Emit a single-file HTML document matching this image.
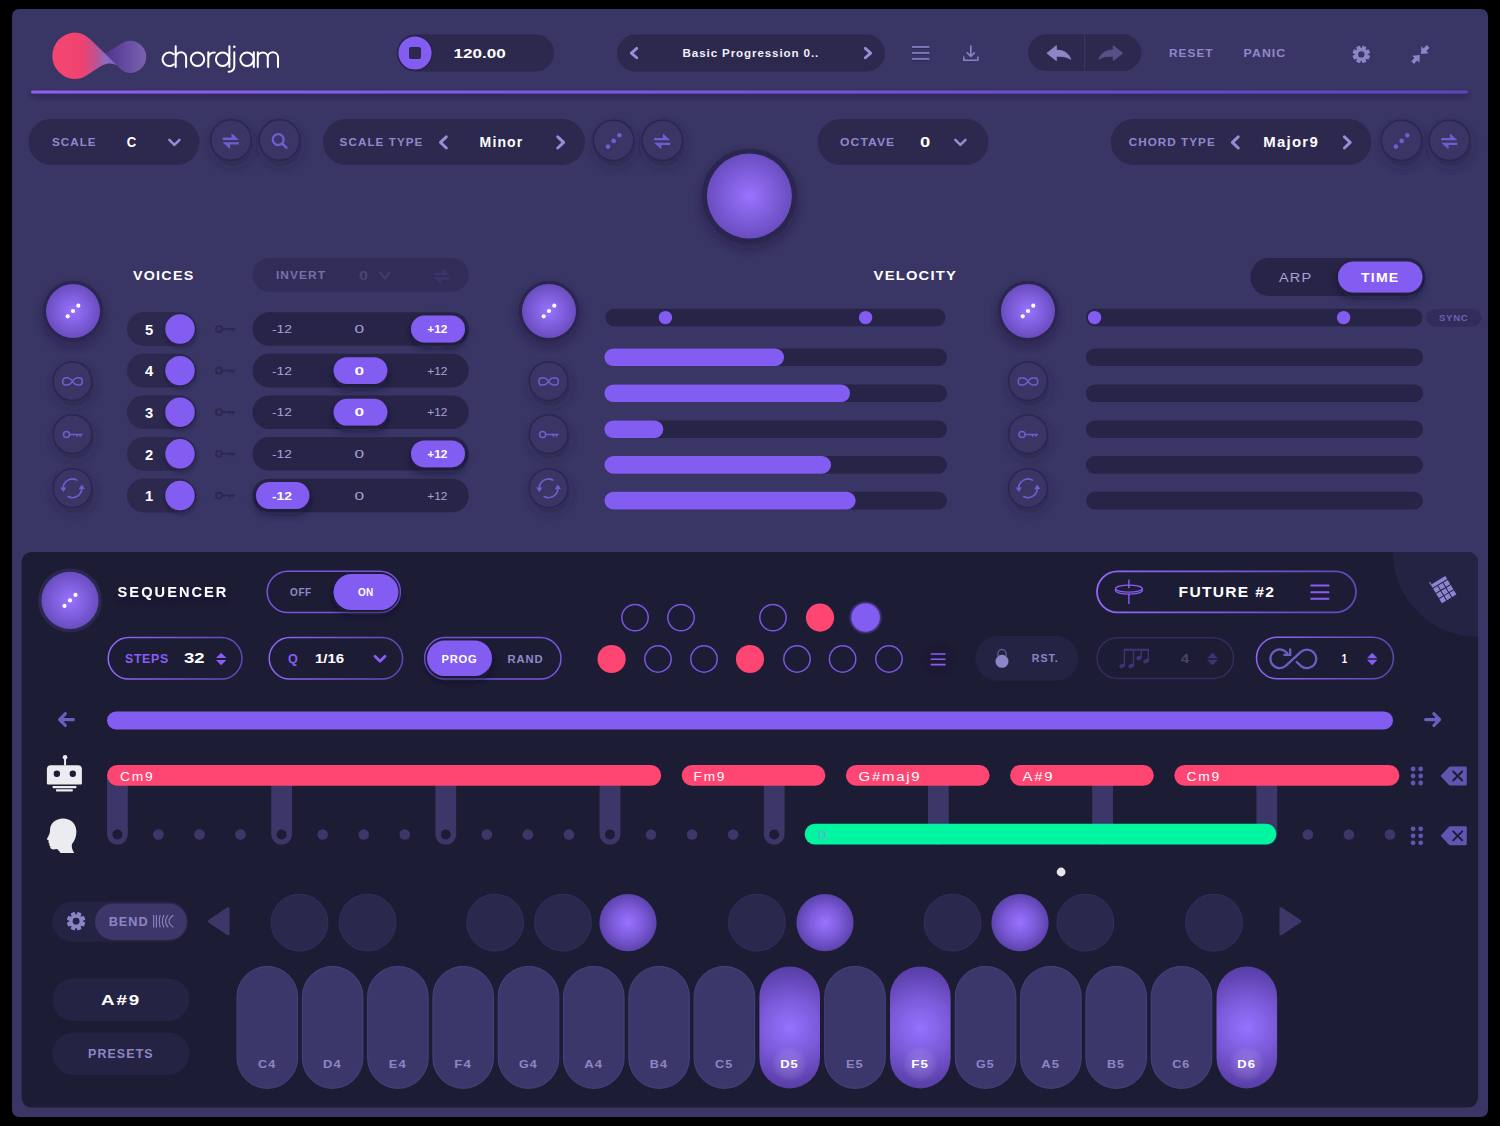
<!DOCTYPE html>
<html><head><meta charset="utf-8"><title>chordjam</title>
<style>html,body{margin:0;padding:0;background:#000;overflow:hidden}svg{display:block}text{font-family:"Liberation Sans",sans-serif;white-space:pre}</style>
</head><body>
<svg width="1500" height="1126" viewBox="0 0 1500 1126">
<defs>
<radialGradient id="kg" cx="50%" cy="50%" r="50%"><stop offset="0" stop-color="#9a73ff"/><stop offset="1" stop-color="#6a4dc0"/></radialGradient>
<radialGradient id="kg2" cx="50%" cy="50%" r="50%"><stop offset="0" stop-color="#9873ff"/><stop offset="0.55" stop-color="#7c5ad8"/><stop offset="1" stop-color="#5c43ad"/></radialGradient>
<radialGradient id="glow" cx="50%" cy="50%" r="50%"><stop offset="0" stop-color="#fff" stop-opacity="0.16"/><stop offset="0.7" stop-color="#fff" stop-opacity="0.08"/><stop offset="1" stop-color="#fff" stop-opacity="0"/></radialGradient>
<linearGradient id="hl" x1="0" x2="1" y1="0" y2="0"><stop offset="0" stop-color="#8d5ff2"/><stop offset="0.45" stop-color="#7a55e0"/><stop offset="1" stop-color="#5a45b8"/></linearGradient>
<linearGradient id="ol" x1="0" x2="1" y1="0" y2="0"><stop offset="0" stop-color="#9466fa"/><stop offset="1" stop-color="#5b49b6"/></linearGradient>
<linearGradient id="lp" gradientUnits="userSpaceOnUse" x1="52" x2="118" y1="0" y2="0"><stop offset="0" stop-color="#f4476f"/><stop offset="0.45" stop-color="#ef4270"/><stop offset="0.65" stop-color="#c4508c"/><stop offset="0.82" stop-color="#8a6cc0"/><stop offset="1" stop-color="#7a62b5"/></linearGradient>
<linearGradient id="lv" gradientUnits="userSpaceOnUse" x1="105" x2="146" y1="0" y2="0"><stop offset="0" stop-color="#50348f"/><stop offset="1" stop-color="#7a62b0"/></linearGradient>
<filter id="sh" x="-50%" y="-50%" width="200%" height="200%"><feDropShadow dx="1.5" dy="5" stdDeviation="4" flood-color="#1a1a40" flood-opacity="0.5"/></filter>
<filter id="sht" x="-50%" y="-50%" width="200%" height="200%"><feDropShadow dx="1" dy="3" stdDeviation="2.5" flood-color="#14122c" flood-opacity="0.45"/></filter>
<filter id="shk" x="-50%" y="-50%" width="200%" height="200%"><feDropShadow dx="0" dy="5" stdDeviation="5" flood-color="#1c183c" flood-opacity="0.5"/></filter>
<filter id="shp" x="-30%" y="-50%" width="160%" height="220%"><feDropShadow dx="0" dy="5" stdDeviation="4" flood-color="#14122c" flood-opacity="0.6"/></filter>
<filter id="shl" x="-5%" y="-300%" width="110%" height="900%"><feDropShadow dx="0" dy="3" stdDeviation="2.5" flood-color="#1c183c" flood-opacity="0.55"/></filter>
<filter id="gl" x="-50%" y="-50%" width="200%" height="200%"><feGaussianBlur stdDeviation="1.2"/></filter>
</defs>
<rect width="1500" height="1126" fill="#000"/>
<rect x="12" y="9" width="1476" height="1108" rx="7" fill="#393564"/>
<path d="M104.8 53.8 L121 44 C124 42 127 40.8 130.1 40.8 A16.1 16.1 0 0 1 130.1 73 C125 73 121 70.5 117.5 65.8 Z" fill="url(#lv)"/>
<path d="M52.3 55.8 A23.3 23.3 0 0 1 74.3 32.5 C81 32.5 86.5 35.5 91 40 L117.5 65.8 C112 62.6 107 62.6 101 66 L88 74.5 C84 77.5 79.5 79.1 74.3 79.1 A23.3 23.3 0 0 1 52.3 55.8 Z" fill="url(#lp)"/>
<path d="M173.6 54.2 A6.7 6.7 0 1 0 173.6 64.4 M175.7 46.2 V67 M175.7 57.5 A5.2 5.2 0 0 1 186.1 57.5 V67 M208.3 52.2 V67 M208.3 59 Q208.3 52.6 214.8 52.6 M229.4 46.2 V67 M234.3 52.2 V66.5 A5.2 5.2 0 0 1 229.1 71.7 H228.6 M253.8 52.2 V67 M257.8 52.2 V67 M257.8 57.4 A5 5 0 0 1 267.8 57.4 V67 M267.8 57.4 A5.1 5.1 0 0 1 278 57.4 V67" fill="none" stroke="#fff" stroke-width="2" stroke-linecap="round" stroke-linejoin="round"/>
<circle cx="197.5" cy="59.3" r="6.7" fill="none" stroke="#fff" stroke-width="2"/>
<circle cx="222.6" cy="59.3" r="6.7" fill="none" stroke="#fff" stroke-width="2"/>
<circle cx="247" cy="59.3" r="6.7" fill="none" stroke="#fff" stroke-width="2"/>
<circle cx="234.3" cy="46.8" r="1.3" fill="#fff"/>
<rect x="31" y="90.6" width="1437" height="2.8" rx="1.4" fill="url(#hl)" filter="url(#shl)"/>
<rect x="397" y="34.5" width="157" height="37" rx="18.5" fill="#2c284e"/>
<circle cx="415" cy="53" r="17.2" fill="#835cf2" stroke="#241f45" stroke-width="1.2"/>
<rect x="409" y="47" width="12" height="12" rx="2" fill="#2c284e"/>
<text x="453.6" y="57.78" font-size="12.8" font-weight="bold" fill="#ffffff" textLength="52.2" lengthAdjust="spacingAndGlyphs">120.00</text>
<rect x="617" y="34.5" width="268" height="37" rx="18.5" fill="#2c284e"/>
<path d="M636.75 48.35 L631.35 53.05 L636.75 57.75" fill="none" stroke="#9490d8" stroke-width="2.9" stroke-linecap="round" stroke-linejoin="round"/>
<path d="M865.3 48.35 L870.7 53.05 L865.3 57.75" fill="none" stroke="#9490d8" stroke-width="2.9" stroke-linecap="round" stroke-linejoin="round"/>
<text transform="translate(682.6 57.15) scale(1.000 1)" font-size="11.6" font-weight="bold" fill="#f1effa" textLength="135.7" lengthAdjust="spacing">Basic Progression 0..</text>
<rect x="912" y="46.15" width="17.3" height="1.7" fill="#8a82c8"/>
<rect x="912" y="47.9" width="17.3" height="1.2" fill="#2c2855" opacity="0.8"/>
<rect x="912" y="52.15" width="17.3" height="1.7" fill="#8a82c8"/>
<rect x="912" y="53.9" width="17.3" height="1.2" fill="#2c2855" opacity="0.8"/>
<rect x="912" y="58.15" width="17.3" height="1.7" fill="#8a82c8"/>
<rect x="912" y="59.9" width="17.3" height="1.2" fill="#2c2855" opacity="0.8"/>
<path d="M970.8 45.6 V56.2 M966.8 52.4 L970.8 56.4 L974.8 52.4 M963.8 56.6 V60.2 H977.9 V56.6" fill="none" stroke="#8a82c8" stroke-width="1.6" stroke-linejoin="round"/>
<rect x="1028.2" y="34.3" width="113.1" height="36.6" rx="18.3" fill="#2c284e"/>
<rect x="1083.9" y="34.3" width="1.4" height="36.6" fill="#393564"/>
<path d="M1046.9 53.2 L1056.4 45.6 L1056.4 50.1 C1063.5 50.1 1068.8 53.2 1070.8 59.4 C1067 56.8 1062 56.2 1056.4 56.2 L1056.4 60.7 Z" fill="#8c86c6" stroke="#8c86c6" stroke-width="0.8" stroke-linejoin="round"/>
<g transform="translate(2169.6 0) scale(-1 1)">
<path d="M1046.9 53.2 L1056.4 45.6 L1056.4 50.1 C1063.5 50.1 1068.8 53.2 1070.8 59.4 C1067 56.8 1062 56.2 1056.4 56.2 L1056.4 60.7 Z" fill="#575087" stroke="#575087" stroke-width="0.8" stroke-linejoin="round"/>
</g>
<text transform="translate(1169 57.35) scale(1.019 1)" font-size="11.6" font-weight="bold" fill="#8f89cc" textLength="42.77" lengthAdjust="spacing">RESET</text>
<text transform="translate(1243.6 57.35) scale(1.062 1)" font-size="11.6" font-weight="bold" fill="#8f89cc" textLength="39.16" lengthAdjust="spacing">PANIC</text>
<path d="M1362.02 48.71 L1363.09 46.4 L1365.69 47.48 L1364.82 49.86 L1365.84 50.88 L1368.22 50.01 L1369.3 52.61 L1366.99 53.68 L1366.99 55.12 L1369.3 56.19 L1368.22 58.79 L1365.84 57.92 L1364.82 58.94 L1365.69 61.32 L1363.09 62.4 L1362.02 60.09 L1360.58 60.09 L1359.51 62.4 L1356.91 61.32 L1357.78 58.94 L1356.76 57.92 L1354.38 58.79 L1353.3 56.19 L1355.61 55.12 L1355.61 53.68 L1353.3 52.61 L1354.38 50.01 L1356.76 50.88 L1357.78 49.86 L1356.91 47.48 L1359.51 46.4 L1360.58 48.71 Z" fill="#8c86c8" stroke="#8c86c8" stroke-width="1.3" stroke-linejoin="round"/>
<circle cx="1361.3" cy="54.4" r="3.2" fill="#393564"/>
<g transform="translate(1420.4 54.5) rotate(-46)">
<path d="M0.7 0 L6.6 -4.9 L6.6 -1.9 L11.2 -1.9 L11.2 1.9 L6.6 1.9 L6.6 4.9 Z" fill="#8c86c8"/>
</g>
<g transform="translate(1420.4 54.5) rotate(134)">
<path d="M0.7 0 L6.6 -4.9 L6.6 -1.9 L11.2 -1.9 L11.2 1.9 L6.6 1.9 L6.6 4.9 Z" fill="#8c86c8"/>
</g>
<rect x="28.4" y="119" width="171" height="46" rx="23" fill="#2c284e"/>
<text transform="translate(52 146.05) scale(1.003 1)" font-size="11.6" font-weight="bold" fill="#8f89cc" textLength="43.48" lengthAdjust="spacing">SCALE</text>
<text x="126.8" y="147.27" font-size="15" font-weight="bold" fill="#ffffff" textLength="9.5" lengthAdjust="spacingAndGlyphs">C</text>
<path d="M169.3 139.8 L174.4 144.9 L179.5 139.8" fill="none" stroke="#9490d8" stroke-width="2.4" stroke-linecap="round" stroke-linejoin="round"/>
<circle cx="231" cy="140" r="20.3" fill="#3a3666" stroke="#2c2853" stroke-width="1.8" filter="url(#sh)"/>
<path d="M222.7 137.5 H231.5 V133.1 L238.9 139.9 H222.7 Z" fill="#6d5fd0"/>
<path d="M238.9 144.5 H230 V148.9 L222.7 142.3 H238.9 Z" fill="#6d5fd0"/>
<circle cx="279.5" cy="140" r="20.3" fill="#3a3666" stroke="#2c2853" stroke-width="1.8" filter="url(#sh)"/>
<circle cx="278.2" cy="139.6" r="5.4" fill="none" stroke="#6d5fd0" stroke-width="2.3"/>
<path d="M282.4 143.9 L286.4 147.6" fill="none" stroke="#6d5fd0" stroke-width="2.6" stroke-linecap="round"/>
<rect x="323" y="119" width="262" height="46" rx="23" fill="#2c284e"/>
<text transform="translate(339.6 146.05) scale(1.008 1)" font-size="11.6" font-weight="bold" fill="#8f89cc" textLength="82.15" lengthAdjust="spacing">SCALE TYPE</text>
<path d="M446.35 136.85 L440.45 142.4 L446.35 147.95" fill="none" stroke="#9490d8" stroke-width="2.9" stroke-linecap="round" stroke-linejoin="round"/>
<text transform="translate(479.6 146.81) scale(1.000 1)" font-size="14" font-weight="bold" fill="#ffffff" textLength="42.6" lengthAdjust="spacing">Minor</text>
<path d="M557.75 136.85 L563.65 142.4 L557.75 147.95" fill="none" stroke="#9490d8" stroke-width="2.9" stroke-linecap="round" stroke-linejoin="round"/>
<circle cx="613.6" cy="140.4" r="20.3" fill="#3a3666" stroke="#2c2853" stroke-width="1.8" filter="url(#sh)"/>
<circle cx="608" cy="146.6" r="2.3" fill="#6d5fd0"/>
<circle cx="613.7" cy="140.9" r="2.3" fill="#6d5fd0"/>
<circle cx="619.4" cy="135.2" r="2.3" fill="#6d5fd0"/>
<circle cx="662.4" cy="140.4" r="20.3" fill="#3a3666" stroke="#2c2853" stroke-width="1.8" filter="url(#sh)"/>
<path d="M654.1 137.9 H662.9 V133.5 L670.3 140.3 H654.1 Z" fill="#6d5fd0"/>
<path d="M670.3 144.9 H661.4 V149.3 L654.1 142.7 H670.3 Z" fill="#6d5fd0"/>
<circle cx="749.4" cy="196" r="47.5" fill="#2b2750" filter="url(#shk)"/>
<circle cx="749.4" cy="196" r="42.5" fill="url(#kg)"/>
<rect x="817.6" y="119" width="170.8" height="46" rx="23" fill="#2c284e"/>
<text transform="translate(840 146.05) scale(1.051 1)" font-size="11.6" font-weight="bold" fill="#8f89cc" textLength="51.58" lengthAdjust="spacing">OCTAVE</text>
<text x="920" y="147.01" font-size="14" font-weight="bold" fill="#ffffff" textLength="10.2" lengthAdjust="spacingAndGlyphs">0</text>
<path d="M955.3 139.8 L960.4 144.9 L965.5 139.8" fill="none" stroke="#9490d8" stroke-width="2.4" stroke-linecap="round" stroke-linejoin="round"/>
<rect x="1110.8" y="119" width="260.5" height="46" rx="23" fill="#2c284e"/>
<text transform="translate(1128.7 146.05) scale(1.007 1)" font-size="11.6" font-weight="bold" fill="#8f89cc" textLength="85.38" lengthAdjust="spacing">CHORD TYPE</text>
<path d="M1238.25 136.85 L1232.35 142.4 L1238.25 147.95" fill="none" stroke="#9490d8" stroke-width="2.9" stroke-linecap="round" stroke-linejoin="round"/>
<text transform="translate(1263.3 146.81) scale(1.066 1)" font-size="14" font-weight="bold" fill="#ffffff" textLength="51.04" lengthAdjust="spacing">Major9</text>
<path d="M1344.35 136.85 L1350.25 142.4 L1344.35 147.95" fill="none" stroke="#9490d8" stroke-width="2.9" stroke-linecap="round" stroke-linejoin="round"/>
<circle cx="1401.5" cy="140.4" r="20.3" fill="#3a3666" stroke="#2c2853" stroke-width="1.8" filter="url(#sh)"/>
<circle cx="1395.9" cy="146.6" r="2.3" fill="#6d5fd0"/>
<circle cx="1401.6" cy="140.9" r="2.3" fill="#6d5fd0"/>
<circle cx="1407.3" cy="135.2" r="2.3" fill="#6d5fd0"/>
<circle cx="1449.5" cy="140.4" r="20.3" fill="#3a3666" stroke="#2c2853" stroke-width="1.8" filter="url(#sh)"/>
<path d="M1441.2 137.9 H1450 V133.5 L1457.4 140.3 H1441.2 Z" fill="#6d5fd0"/>
<path d="M1457.4 144.9 H1448.5 V149.3 L1441.2 142.7 H1457.4 Z" fill="#6d5fd0"/>
<text transform="translate(133 279.6) scale(1.070 1)" font-size="13.4" font-weight="bold" fill="#ffffff" textLength="56.27" lengthAdjust="spacing">VOICES</text>
<circle cx="73" cy="311" r="30.2" fill="#2b2750" filter="url(#shk)"/>
<circle cx="73" cy="311" r="27" fill="url(#kg)"/>
<circle cx="67.7" cy="316.3" r="2.1" fill="#fff"/>
<circle cx="73" cy="311" r="2.1" fill="#fff"/>
<circle cx="78.3" cy="305.7" r="2.1" fill="#fff"/>
<circle cx="72.5" cy="381.2" r="19.4" fill="#3a3666" stroke="#2c2853" stroke-width="1.8" filter="url(#sh)"/>
<path d="M72.5 381.4 C75.5 376.5 82.3 376.5 82.3 381.4 C82.3 386.3 75.5 386.3 72.5 381.4 C69.5 376.5 62.7 376.5 62.7 381.4 C62.7 386.3 69.5 386.3 72.5 381.4 Z" fill="none" stroke="#6d5fd0" stroke-width="1.5"/>
<circle cx="72.5" cy="434.2" r="19.4" fill="#3a3666" stroke="#2c2853" stroke-width="1.8" filter="url(#sh)"/>
<circle cx="66.5" cy="434.6" r="3" fill="none" stroke="#6d5fd0" stroke-width="1.5"/>
<path d="M69.5 434.5 H82.5" fill="none" stroke="#6d5fd0" stroke-width="1.5"/>
<path d="M75.7 434.6 l1.3 3 l1.3 -3 Z M78.9 434.6 l1.3 3 l1.3 -3 Z" fill="#6d5fd0"/>
<circle cx="72.5" cy="488.2" r="19.4" fill="#3a3666" stroke="#2c2853" stroke-width="1.8" filter="url(#sh)"/>
<path d="M76.87 480.09 A9.3 9.3 0 0 0 63.21 488.62" fill="none" stroke="#6d5fd0" stroke-width="1.6" stroke-linecap="round"/>
<path d="M60.21 487.42 l3 4.6 l3.2 -4.4 Z" fill="#6d5fd0"/>
<path d="M68.13 496.51 A9.3 9.3 0 0 0 81.79 487.98" fill="none" stroke="#6d5fd0" stroke-width="1.6" stroke-linecap="round"/>
<path d="M78.69 489.18 l3 -4.6 l3.2 4.4 Z" fill="#6d5fd0"/>
<circle cx="548.6" cy="381.2" r="19.4" fill="#3a3666" stroke="#2c2853" stroke-width="1.8" filter="url(#sh)"/>
<path d="M548.6 381.4 C551.6 376.5 558.4 376.5 558.4 381.4 C558.4 386.3 551.6 386.3 548.6 381.4 C545.6 376.5 538.8 376.5 538.8 381.4 C538.8 386.3 545.6 386.3 548.6 381.4 Z" fill="none" stroke="#6d5fd0" stroke-width="1.5"/>
<circle cx="548.6" cy="434.2" r="19.4" fill="#3a3666" stroke="#2c2853" stroke-width="1.8" filter="url(#sh)"/>
<circle cx="542.6" cy="434.6" r="3" fill="none" stroke="#6d5fd0" stroke-width="1.5"/>
<path d="M545.6 434.5 H558.6" fill="none" stroke="#6d5fd0" stroke-width="1.5"/>
<path d="M551.8 434.6 l1.3 3 l1.3 -3 Z M555 434.6 l1.3 3 l1.3 -3 Z" fill="#6d5fd0"/>
<circle cx="548.6" cy="488.2" r="19.4" fill="#3a3666" stroke="#2c2853" stroke-width="1.8" filter="url(#sh)"/>
<path d="M552.97 480.09 A9.3 9.3 0 0 0 539.31 488.62" fill="none" stroke="#6d5fd0" stroke-width="1.6" stroke-linecap="round"/>
<path d="M536.31 487.42 l3 4.6 l3.2 -4.4 Z" fill="#6d5fd0"/>
<path d="M544.23 496.51 A9.3 9.3 0 0 0 557.89 487.98" fill="none" stroke="#6d5fd0" stroke-width="1.6" stroke-linecap="round"/>
<path d="M554.79 489.18 l3 -4.6 l3.2 4.4 Z" fill="#6d5fd0"/>
<circle cx="1028" cy="381.2" r="19.4" fill="#3a3666" stroke="#2c2853" stroke-width="1.8" filter="url(#sh)"/>
<path d="M1028 381.4 C1031 376.5 1037.8 376.5 1037.8 381.4 C1037.8 386.3 1031 386.3 1028 381.4 C1025 376.5 1018.2 376.5 1018.2 381.4 C1018.2 386.3 1025 386.3 1028 381.4 Z" fill="none" stroke="#6d5fd0" stroke-width="1.5"/>
<circle cx="1028" cy="434.2" r="19.4" fill="#3a3666" stroke="#2c2853" stroke-width="1.8" filter="url(#sh)"/>
<circle cx="1022" cy="434.6" r="3" fill="none" stroke="#6d5fd0" stroke-width="1.5"/>
<path d="M1025 434.5 H1038" fill="none" stroke="#6d5fd0" stroke-width="1.5"/>
<path d="M1031.2 434.6 l1.3 3 l1.3 -3 Z M1034.4 434.6 l1.3 3 l1.3 -3 Z" fill="#6d5fd0"/>
<circle cx="1028" cy="488.2" r="19.4" fill="#3a3666" stroke="#2c2853" stroke-width="1.8" filter="url(#sh)"/>
<path d="M1032.37 480.09 A9.3 9.3 0 0 0 1018.71 488.62" fill="none" stroke="#6d5fd0" stroke-width="1.6" stroke-linecap="round"/>
<path d="M1015.71 487.42 l3 4.6 l3.2 -4.4 Z" fill="#6d5fd0"/>
<path d="M1023.63 496.51 A9.3 9.3 0 0 0 1037.29 487.98" fill="none" stroke="#6d5fd0" stroke-width="1.6" stroke-linecap="round"/>
<path d="M1034.19 489.18 l3 -4.6 l3.2 4.4 Z" fill="#6d5fd0"/>
<rect x="252.5" y="258.3" width="216.3" height="33.3" rx="16.65" fill="#312d58"/>
<text transform="translate(276 279.15) scale(1.029 1)" font-size="11.6" font-weight="bold" fill="#7871aa" textLength="47.61" lengthAdjust="spacing">INVERT</text>
<text x="359" y="279.65" font-size="13" font-weight="bold" fill="#4a4576" textLength="9" lengthAdjust="spacingAndGlyphs">0</text>
<path d="M380.4 272.8 L385 278.4 L389.6 272.8" fill="none" stroke="#433e72" stroke-width="2" stroke-linecap="round" stroke-linejoin="round"/>
<path d="M433.5 272.7 H442.3 V268.3 L449.7 275.1 H433.5 Z" fill="#3a3668"/>
<path d="M449.7 279.7 H440.8 V284.1 L433.5 277.5 H449.7 Z" fill="#3a3668"/>
<rect x="127" y="312.1" width="69" height="33.8" rx="16.9" fill="#2c284e"/>
<text x="145" y="334.76" font-size="14.4" font-weight="bold" fill="#ffffff" textLength="8.2" lengthAdjust="spacingAndGlyphs">5</text>
<circle cx="180" cy="329" r="14.7" fill="#835cf2" filter="url(#sht)"/>
<circle cx="219" cy="329" r="3" fill="none" stroke="#2c284e" stroke-width="1.8"/>
<path d="M222 328.9 H235" fill="none" stroke="#2c284e" stroke-width="1.8"/>
<path d="M228.2 329 l1.3 3 l1.3 -3 Z M231.4 329 l1.3 3 l1.3 -3 Z" fill="#2c284e"/>
<rect x="252.5" y="312.2" width="216.3" height="33.6" rx="16.8" fill="#272447"/>
<rect x="411" y="315.6" width="54" height="26.8" rx="13.4" fill="#835cf2" filter="url(#shp)"/>
<text x="272" y="333.28" font-size="11.4" font-weight="normal" fill="#a8a0d8" textLength="20" lengthAdjust="spacingAndGlyphs">-12</text>
<text x="354.6" y="333.28" font-size="11.4" font-weight="normal" fill="#a8a0d8" textLength="9.6" lengthAdjust="spacingAndGlyphs">0</text>
<text x="427.2" y="333.28" font-size="11.4" font-weight="bold" fill="#ffffff" textLength="20.2" lengthAdjust="spacingAndGlyphs">+12</text>
<rect x="127" y="353.7" width="69" height="33.8" rx="16.9" fill="#2c284e"/>
<text x="145" y="376.36" font-size="14.4" font-weight="bold" fill="#ffffff" textLength="8.2" lengthAdjust="spacingAndGlyphs">4</text>
<circle cx="180" cy="370.6" r="14.7" fill="#835cf2" filter="url(#sht)"/>
<circle cx="219" cy="370.6" r="3" fill="none" stroke="#2c284e" stroke-width="1.8"/>
<path d="M222 370.5 H235" fill="none" stroke="#2c284e" stroke-width="1.8"/>
<path d="M228.2 370.6 l1.3 3 l1.3 -3 Z M231.4 370.6 l1.3 3 l1.3 -3 Z" fill="#2c284e"/>
<rect x="252.5" y="353.8" width="216.3" height="33.6" rx="16.8" fill="#272447"/>
<rect x="333.6" y="357.2" width="53.8" height="26.8" rx="13.4" fill="#835cf2" filter="url(#shp)"/>
<text x="272" y="374.88" font-size="11.4" font-weight="normal" fill="#a8a0d8" textLength="20" lengthAdjust="spacingAndGlyphs">-12</text>
<text x="354.6" y="374.88" font-size="11.4" font-weight="bold" fill="#ffffff" textLength="9.6" lengthAdjust="spacingAndGlyphs">0</text>
<text x="427.2" y="374.88" font-size="11.4" font-weight="normal" fill="#a8a0d8" textLength="20.2" lengthAdjust="spacingAndGlyphs">+12</text>
<rect x="127" y="395.3" width="69" height="33.8" rx="16.9" fill="#2c284e"/>
<text x="145" y="417.96" font-size="14.4" font-weight="bold" fill="#ffffff" textLength="8.2" lengthAdjust="spacingAndGlyphs">3</text>
<circle cx="180" cy="412.2" r="14.7" fill="#835cf2" filter="url(#sht)"/>
<circle cx="219" cy="412.2" r="3" fill="none" stroke="#2c284e" stroke-width="1.8"/>
<path d="M222 412.1 H235" fill="none" stroke="#2c284e" stroke-width="1.8"/>
<path d="M228.2 412.2 l1.3 3 l1.3 -3 Z M231.4 412.2 l1.3 3 l1.3 -3 Z" fill="#2c284e"/>
<rect x="252.5" y="395.4" width="216.3" height="33.6" rx="16.8" fill="#272447"/>
<rect x="333.6" y="398.8" width="53.8" height="26.8" rx="13.4" fill="#835cf2" filter="url(#shp)"/>
<text x="272" y="416.48" font-size="11.4" font-weight="normal" fill="#a8a0d8" textLength="20" lengthAdjust="spacingAndGlyphs">-12</text>
<text x="354.6" y="416.48" font-size="11.4" font-weight="bold" fill="#ffffff" textLength="9.6" lengthAdjust="spacingAndGlyphs">0</text>
<text x="427.2" y="416.48" font-size="11.4" font-weight="normal" fill="#a8a0d8" textLength="20.2" lengthAdjust="spacingAndGlyphs">+12</text>
<rect x="127" y="436.9" width="69" height="33.8" rx="16.9" fill="#2c284e"/>
<text x="145" y="459.56" font-size="14.4" font-weight="bold" fill="#ffffff" textLength="8.2" lengthAdjust="spacingAndGlyphs">2</text>
<circle cx="180" cy="453.8" r="14.7" fill="#835cf2" filter="url(#sht)"/>
<circle cx="219" cy="453.8" r="3" fill="none" stroke="#2c284e" stroke-width="1.8"/>
<path d="M222 453.7 H235" fill="none" stroke="#2c284e" stroke-width="1.8"/>
<path d="M228.2 453.8 l1.3 3 l1.3 -3 Z M231.4 453.8 l1.3 3 l1.3 -3 Z" fill="#2c284e"/>
<rect x="252.5" y="437" width="216.3" height="33.6" rx="16.8" fill="#272447"/>
<rect x="411" y="440.4" width="54" height="26.8" rx="13.4" fill="#835cf2" filter="url(#shp)"/>
<text x="272" y="458.08" font-size="11.4" font-weight="normal" fill="#a8a0d8" textLength="20" lengthAdjust="spacingAndGlyphs">-12</text>
<text x="354.6" y="458.08" font-size="11.4" font-weight="normal" fill="#a8a0d8" textLength="9.6" lengthAdjust="spacingAndGlyphs">0</text>
<text x="427.2" y="458.08" font-size="11.4" font-weight="bold" fill="#ffffff" textLength="20.2" lengthAdjust="spacingAndGlyphs">+12</text>
<rect x="127" y="478.6" width="69" height="33.8" rx="16.9" fill="#2c284e"/>
<text x="145" y="501.26" font-size="14.4" font-weight="bold" fill="#ffffff" textLength="8.2" lengthAdjust="spacingAndGlyphs">1</text>
<circle cx="180" cy="495.5" r="14.7" fill="#835cf2" filter="url(#sht)"/>
<circle cx="219" cy="495.5" r="3" fill="none" stroke="#2c284e" stroke-width="1.8"/>
<path d="M222 495.4 H235" fill="none" stroke="#2c284e" stroke-width="1.8"/>
<path d="M228.2 495.5 l1.3 3 l1.3 -3 Z M231.4 495.5 l1.3 3 l1.3 -3 Z" fill="#2c284e"/>
<rect x="252.5" y="478.7" width="216.3" height="33.6" rx="16.8" fill="#272447"/>
<rect x="256" y="482.1" width="53.4" height="26.8" rx="13.4" fill="#835cf2" filter="url(#shp)"/>
<text x="272" y="499.78" font-size="11.4" font-weight="bold" fill="#ffffff" textLength="20" lengthAdjust="spacingAndGlyphs">-12</text>
<text x="354.6" y="499.78" font-size="11.4" font-weight="normal" fill="#a8a0d8" textLength="9.6" lengthAdjust="spacingAndGlyphs">0</text>
<text x="427.2" y="499.78" font-size="11.4" font-weight="normal" fill="#a8a0d8" textLength="20.2" lengthAdjust="spacingAndGlyphs">+12</text>
<text transform="translate(873.6 279.6) scale(1.101 1)" font-size="13.4" font-weight="bold" fill="#ffffff" textLength="74.67" lengthAdjust="spacing">VELOCITY</text>
<circle cx="549" cy="311" r="30.2" fill="#2b2750" filter="url(#shk)"/>
<circle cx="549" cy="311" r="27" fill="url(#kg)"/>
<circle cx="543.7" cy="316.3" r="2.1" fill="#fff"/>
<circle cx="549" cy="311" r="2.1" fill="#fff"/>
<circle cx="554.3" cy="305.7" r="2.1" fill="#fff"/>
<rect x="605.6" y="308.8" width="339.8" height="17.4" rx="8.7" fill="#272447"/>
<circle cx="665.4" cy="317.6" r="6.7" fill="#835cf2"/>
<circle cx="865.6" cy="317.6" r="6.7" fill="#835cf2"/>
<rect x="604.4" y="348.4" width="342.6" height="17.6" rx="8.8" fill="#272447"/>
<rect x="604.4" y="348.4" width="179.6" height="17.6" rx="8.8" fill="#835cf2"/>
<rect x="604.4" y="384.4" width="342.6" height="17.6" rx="8.8" fill="#272447"/>
<rect x="604.4" y="384.4" width="245.6" height="17.6" rx="8.8" fill="#835cf2"/>
<rect x="604.4" y="420.4" width="342.6" height="17.6" rx="8.8" fill="#272447"/>
<rect x="604.4" y="420.4" width="58.9" height="17.6" rx="8.8" fill="#835cf2"/>
<rect x="604.4" y="456.1" width="342.6" height="17.6" rx="8.8" fill="#272447"/>
<rect x="604.4" y="456.1" width="226.6" height="17.6" rx="8.8" fill="#835cf2"/>
<rect x="604.4" y="491.8" width="342.6" height="17.6" rx="8.8" fill="#272447"/>
<rect x="604.4" y="491.8" width="251.3" height="17.6" rx="8.8" fill="#835cf2"/>
<rect x="1250.4" y="258" width="175" height="38" rx="19" fill="#272447"/>
<rect x="1338" y="261.6" width="84.4" height="30.8" rx="15.4" fill="#835cf2" filter="url(#shp)"/>
<text transform="translate(1279 281.93) scale(1.099 1)" font-size="13.2" font-weight="normal" fill="#a8a0d8" textLength="29.3" lengthAdjust="spacing">ARP</text>
<text transform="translate(1361 281.93) scale(1.067 1)" font-size="13.2" font-weight="bold" fill="#ffffff" textLength="34.87" lengthAdjust="spacing">TIME</text>
<circle cx="1028" cy="311" r="30.2" fill="#2b2750" filter="url(#shk)"/>
<circle cx="1028" cy="311" r="27" fill="url(#kg)"/>
<circle cx="1022.7" cy="316.3" r="2.1" fill="#fff"/>
<circle cx="1028" cy="311" r="2.1" fill="#fff"/>
<circle cx="1033.3" cy="305.7" r="2.1" fill="#fff"/>
<rect x="1086" y="308.8" width="336.4" height="17.4" rx="8.7" fill="#272447"/>
<circle cx="1094.6" cy="317.6" r="6.7" fill="#835cf2"/>
<circle cx="1343.6" cy="317.6" r="6.7" fill="#835cf2"/>
<rect x="1426" y="309" width="55.4" height="17.4" rx="8.7" fill="#312d58"/>
<text transform="translate(1439 321.24) scale(1.000 1)" font-size="9.6" font-weight="bold" fill="#6a60b8" textLength="28.8" lengthAdjust="spacing">SYNC</text>
<rect x="1086" y="348.4" width="337" height="17.6" rx="8.8" fill="#272447"/>
<rect x="1086" y="384.4" width="337" height="17.6" rx="8.8" fill="#272447"/>
<rect x="1086" y="420.4" width="337" height="17.6" rx="8.8" fill="#272447"/>
<rect x="1086" y="456.1" width="337" height="17.6" rx="8.8" fill="#272447"/>
<rect x="1086" y="491.8" width="337" height="17.6" rx="8.8" fill="#272447"/>
<rect x="21.6" y="552" width="1456.4" height="555.6" rx="10" fill="#1d1c35"/>
<clipPath id="cq"><rect x="21.6" y="552" width="1456.4" height="555.6" rx="10"/></clipPath>
<circle cx="1478" cy="552" r="85" fill="#252344" clip-path="url(#cq)"/>
<g transform="translate(1443.6 589.6) rotate(-31)" fill="#8c86d0">
<rect x="-8.5" y="-10.8" width="17" height="3.6"/>
<rect x="-8.5" y="-6.2" width="5" height="5"/>
<rect x="-2.5" y="-6.2" width="5" height="5"/>
<rect x="3.5" y="-6.2" width="5" height="5"/>
<rect x="-8.5" y="-0.2" width="5" height="5"/>
<rect x="-2.5" y="-0.2" width="5" height="5"/>
<rect x="3.5" y="-0.2" width="5" height="5"/>
<rect x="-8.5" y="5.8" width="5" height="5"/>
<rect x="-2.5" y="5.8" width="5" height="5"/>
<rect x="3.5" y="5.8" width="5" height="5"/>
<rect x="-8.6" y="-13.8" width="1.1" height="3.2"/>
</g>
<circle cx="70" cy="600.4" r="32" fill="#2b2850"/>
<circle cx="70" cy="600.4" r="28.6" fill="url(#kg)"/>
<circle cx="64.5" cy="605.9" r="2.1" fill="#fff"/>
<circle cx="70" cy="600.4" r="2.1" fill="#fff"/>
<circle cx="75.5" cy="594.9" r="2.1" fill="#fff"/>
<text x="117.6" y="597.43" font-size="14.6" font-weight="bold" fill="#fff" textLength="108.8" lengthAdjust="spacing" filter="url(#shp)">SEQUENCER</text>
<rect x="267.2" y="571.2" width="133.2" height="41.4" rx="20.7" fill="none" stroke="#7a55e0" stroke-width="1.5"/>
<rect x="333.6" y="574" width="64.8" height="36" rx="18" fill="#835cf2" filter="url(#shp)"/>
<text transform="translate(290 595.58) scale(1.000 1)" font-size="10" font-weight="bold" fill="#8f89cc" textLength="21.2" lengthAdjust="spacing">OFF</text>
<text transform="translate(358 595.58) scale(1.000 1)" font-size="10" font-weight="bold" fill="#ffffff" textLength="15.2" lengthAdjust="spacing">ON</text>
<rect x="108.2" y="637.6" width="133.8" height="41.4" rx="20.7" fill="none" stroke="url(#ol)" stroke-width="1.5"/>
<text transform="translate(125 663.04) scale(1.000 1)" font-size="12.4" font-weight="bold" fill="#8a5cf5" textLength="43.2" lengthAdjust="spacing">STEPS</text>
<text x="184" y="663.21" font-size="14" font-weight="bold" fill="#ffffff" textLength="20.6" lengthAdjust="spacingAndGlyphs">32</text>
<path d="M221.2 652.7 l5.2 5.4 h-10.4 Z M221.2 665.3 l5.2 -5.4 h-10.4 Z" fill="#8a5cf5"/>
<rect x="269.2" y="637.6" width="133.4" height="41.4" rx="20.7" fill="none" stroke="url(#ol)" stroke-width="1.5"/>
<text transform="translate(288 663.24) scale(1.016 1)" font-size="12.4" font-weight="bold" fill="#8a5cf5" textLength="9.64" lengthAdjust="spacing">Q</text>
<text x="315" y="663.2" font-size="13.4" font-weight="bold" fill="#ffffff" textLength="29.2" lengthAdjust="spacingAndGlyphs">1/16</text>
<path d="M375 656.3 L380 661.3 L385 656.3" fill="none" stroke="#8a5cf5" stroke-width="2.8" stroke-linecap="round" stroke-linejoin="round"/>
<rect x="424.6" y="637.6" width="136.4" height="41.4" rx="20.7" fill="none" stroke="#7a55e0" stroke-width="1.5"/>
<rect x="427" y="640.4" width="65" height="35.6" rx="17.8" fill="#835cf2" filter="url(#shp)"/>
<text transform="translate(441.4 662.61) scale(1.000 1)" font-size="11.2" font-weight="bold" fill="#ffffff" textLength="35.4" lengthAdjust="spacing">PROG</text>
<text transform="translate(507.4 662.61) scale(1.000 1)" font-size="11.2" font-weight="bold" fill="#8f89cc" textLength="35.2" lengthAdjust="spacing">RAND</text>
<circle cx="635" cy="617.6" r="13.2" fill="none" stroke="#7a55e0" stroke-width="1.5"/>
<circle cx="681" cy="617.6" r="13.2" fill="none" stroke="#7a55e0" stroke-width="1.5"/>
<circle cx="773" cy="617.6" r="13.2" fill="none" stroke="#7a55e0" stroke-width="1.5"/>
<circle cx="820" cy="617.6" r="14.1" fill="#ff4572"/>
<circle cx="865.6" cy="617.6" r="15.2" fill="#835cf2" filter="url(#gl)" opacity="0.7"/>
<circle cx="865.6" cy="617.6" r="14.1" fill="#835cf2"/>
<circle cx="611.6" cy="659" r="14.1" fill="#ff4572"/>
<circle cx="658" cy="659" r="13.2" fill="none" stroke="#7a55e0" stroke-width="1.5"/>
<circle cx="704" cy="659" r="13.2" fill="none" stroke="#7a55e0" stroke-width="1.5"/>
<circle cx="750" cy="659" r="14.1" fill="#ff4572"/>
<circle cx="797" cy="659" r="13.2" fill="none" stroke="#7a55e0" stroke-width="1.5"/>
<circle cx="842.6" cy="659" r="13.2" fill="none" stroke="#7a55e0" stroke-width="1.5"/>
<circle cx="889" cy="659" r="13.2" fill="none" stroke="#7a55e0" stroke-width="1.5"/>
<circle cx="938" cy="659.3" r="17" fill="#1b1a32"/>
<rect x="930.6" y="653.2" width="15" height="1.6" rx="0.5" fill="#8a5cf5"/>
<rect x="930.6" y="658.5" width="15" height="1.6" rx="0.5" fill="#8a5cf5"/>
<rect x="930.6" y="663.8" width="15" height="1.6" rx="0.5" fill="#8a5cf5"/>
<rect x="975.4" y="636.1" width="102.9" height="44.7" rx="22.35" fill="#252344"/>
<path d="M997.9 656 V653.6 A4.1 4.1 0 0 1 1006.1 653.6 V656" fill="none" stroke="#5d5795" stroke-width="1.3"/>
<circle cx="1002" cy="661.3" r="6.5" fill="#8c86c6"/>
<text transform="translate(1031.8 662.18) scale(1.066 1)" font-size="10" font-weight="bold" fill="#8c86c6" textLength="24.21" lengthAdjust="spacing">RST.</text>
<rect x="1097" y="637.8" width="136.5" height="40.7" rx="20.35" fill="none" stroke="#342b60" stroke-width="1.5"/>
<rect x="1123.6" y="648.7" width="25.4" height="2.2" fill="#3e3272"/>
<rect x="1123.7" y="649" width="1.4" height="16.7" fill="#3e3272"/>
<ellipse cx="1122.1" cy="665.9" rx="2.9" ry="2.1" fill="#3e3272" transform="rotate(-25 1122.1 665.9)"/>
<rect x="1132.8" y="649" width="1.4" height="16.7" fill="#3e3272"/>
<ellipse cx="1131.2" cy="665.9" rx="2.9" ry="2.1" fill="#3e3272" transform="rotate(-25 1131.2 665.9)"/>
<rect x="1140.6" y="649" width="1.4" height="8.8" fill="#3e3272"/>
<ellipse cx="1139" cy="658" rx="2.9" ry="2.1" fill="#3e3272" transform="rotate(-25 1139 658)"/>
<rect x="1147.6" y="649" width="1.4" height="12" fill="#3e3272"/>
<ellipse cx="1146" cy="661.2" rx="2.9" ry="2.1" fill="#3e3272" transform="rotate(-25 1146 661.2)"/>
<text x="1180.8" y="662.8" font-size="13.4" font-weight="bold" fill="#48456a" textLength="8.4" lengthAdjust="spacingAndGlyphs">4</text>
<path d="M1212.5 652.6 l5.4 5.6 h-10.8 Z M1212.5 665.4 l5.4 -5.6 h-10.8 Z" fill="#3e3272"/>
<rect x="1097" y="571.3" width="259" height="41.1" rx="20.55" fill="none" stroke="url(#ol)" stroke-width="1.8"/>
<path d="M1128.9 579.4 V588.2 M1128.9 593.8 V604" fill="none" stroke="#8a5cf5" stroke-width="1.4"/>
<ellipse cx="1128.9" cy="588.6" rx="13.4" ry="3.5" fill="none" stroke="#8a5cf5" stroke-width="1.3"/>
<path d="M1115.5 589 V590.6 A13.4 3.5 0 0 0 1142.3 590.6 V589" fill="none" stroke="#8a5cf5" stroke-width="1.3"/>
<text transform="translate(1178.6 596.96) scale(1.082 1)" font-size="14.4" font-weight="bold" fill="#ffffff" textLength="87.99" lengthAdjust="spacing">FUTURE #2</text>
<rect x="1310.4" y="584.6" width="19" height="2" rx="0.6" fill="#8a5cf5"/>
<rect x="1310.4" y="591.3" width="19" height="2" rx="0.6" fill="#8a5cf5"/>
<rect x="1310.4" y="597.8" width="19" height="2" rx="0.6" fill="#8a5cf5"/>
<rect x="1256.5" y="637.2" width="136.9" height="41.6" rx="20.8" fill="none" stroke="url(#ol)" stroke-width="1.5"/>
<path d="M1287.3 653.4 A9.3 9.3 0 1 0 1285.7 665.9 L1300.9 651.8 A9.3 9.3 0 1 1 1300.9 665.9 L1296.7 662" fill="none" stroke="#6a60c0" stroke-width="2.3" stroke-linecap="round" stroke-linejoin="round"/>
<path d="M1283.4 654.9 H1290.2 V648.4" fill="none" stroke="#6a60c0" stroke-width="2.3" stroke-linejoin="miter"/>
<text x="1341.8" y="663.07" font-size="13.6" font-weight="bold" fill="#ffffff" textLength="5.4" lengthAdjust="spacingAndGlyphs">1</text>
<path d="M1372.2 652.65 l5.2 5.5 h-10.4 Z M1372.2 665.35 l5.2 -5.5 h-10.4 Z" fill="#835cf2"/>
<path d="M73.4 719.6 H60.4 M65.4 713.7 L59.6 719.6 L65.4 725.5" fill="none" stroke="#6762c2" stroke-width="3.1" stroke-linecap="round" stroke-linejoin="round"/>
<path d="M1425.6 719.6 H1438.6 M1433.8 713.7 L1439.6 719.6 L1433.8 725.5" fill="none" stroke="#6762c2" stroke-width="3.1" stroke-linecap="round" stroke-linejoin="round"/>
<rect x="107" y="711.4" width="1286" height="18" rx="9" fill="#835cf2"/>
<circle cx="65.05" cy="757.3" r="2.3" fill="#ebebf0"/>
<rect x="64.05" y="757" width="2" height="8.4" fill="#ebebf0"/>
<path d="M46.9 769.2 A4 4 0 0 1 50.9 765.2 H77.9 A4 4 0 0 1 81.9 769.2 V783.6 A1 1 0 0 1 80.9 784.6 H47.9 A1 1 0 0 1 46.9 783.6 Z" fill="#ebebf0"/>
<circle cx="56.85" cy="773.8" r="3.2" fill="#1d1c35"/>
<circle cx="72.8" cy="773.8" r="3.2" fill="#1d1c35"/>
<rect x="52.6" y="786" width="23.8" height="2.2" rx="0.6" fill="#ebebf0"/>
<rect x="56" y="789.3" width="16.8" height="2.1" rx="0.6" fill="#ebebf0"/>
<path d="M60.5 852.9 L74.2 852.9 C72.4 850 71.2 847 72 844 C74.6 841 76.4 836.5 76.4 831.5 C76.4 823.8 70.6 818.5 63 818.5 C55.6 818.5 50 823.6 50 830.2 C50 832.2 49.5 834 48.5 836 L46.7 839.3 L48.8 840.4 L48.3 842.4 L49.5 843.3 L49 845.1 L50.2 846.1 C50 848.2 51 849.4 53 849.4 L57 848.9 C58.5 850 59.8 851.5 60.5 852.9 Z" fill="#ebebf0"/>
<path d="M107 776 V834.4 A10.4 10.4 0 0 0 127.8 834.4 V776 Z" fill="#3c3768"/>
<path d="M271.2 776 V834.4 A10.4 10.4 0 0 0 292 834.4 V776 Z" fill="#3c3768"/>
<path d="M435.4 776 V834.4 A10.4 10.4 0 0 0 456.2 834.4 V776 Z" fill="#3c3768"/>
<path d="M599.6 776 V834.4 A10.4 10.4 0 0 0 620.4 834.4 V776 Z" fill="#3c3768"/>
<path d="M763.8 776 V834.4 A10.4 10.4 0 0 0 784.6 834.4 V776 Z" fill="#3c3768"/>
<path d="M928 776 V834.4 A10.4 10.4 0 0 0 948.8 834.4 V776 Z" fill="#3c3768"/>
<path d="M1092.2 776 V834.4 A10.4 10.4 0 0 0 1113 834.4 V776 Z" fill="#3c3768"/>
<path d="M1256.4 776 V834.4 A10.4 10.4 0 0 0 1277.2 834.4 V776 Z" fill="#3c3768"/>
<circle cx="117.4" cy="834.5" r="5" fill="#1d1c35"/>
<circle cx="158.45" cy="834.5" r="5.3" fill="#3c3768"/>
<circle cx="199.5" cy="834.5" r="5.3" fill="#3c3768"/>
<circle cx="240.55" cy="834.5" r="5.3" fill="#3c3768"/>
<circle cx="281.6" cy="834.5" r="5" fill="#1d1c35"/>
<circle cx="322.65" cy="834.5" r="5.3" fill="#3c3768"/>
<circle cx="363.7" cy="834.5" r="5.3" fill="#3c3768"/>
<circle cx="404.75" cy="834.5" r="5.3" fill="#3c3768"/>
<circle cx="445.8" cy="834.5" r="5" fill="#1d1c35"/>
<circle cx="486.85" cy="834.5" r="5.3" fill="#3c3768"/>
<circle cx="527.9" cy="834.5" r="5.3" fill="#3c3768"/>
<circle cx="568.95" cy="834.5" r="5.3" fill="#3c3768"/>
<circle cx="610" cy="834.5" r="5" fill="#1d1c35"/>
<circle cx="651.05" cy="834.5" r="5.3" fill="#3c3768"/>
<circle cx="692.1" cy="834.5" r="5.3" fill="#3c3768"/>
<circle cx="733.15" cy="834.5" r="5.3" fill="#3c3768"/>
<circle cx="774.2" cy="834.5" r="5" fill="#1d1c35"/>
<circle cx="1307.85" cy="834.5" r="5.3" fill="#3c3768"/>
<circle cx="1348.9" cy="834.5" r="5.3" fill="#3c3768"/>
<circle cx="1389.95" cy="834.5" r="5.3" fill="#3c3768"/>
<rect x="107" y="765" width="554.17" height="20.8" rx="10.4" fill="#ff4572"/>
<text transform="translate(120 780.97) scale(1.133 1)" font-size="12.2" font-weight="normal" fill="#fff" textLength="28.77" lengthAdjust="spacing">Cm9</text>
<rect x="681.7" y="765" width="143.68" height="20.8" rx="10.4" fill="#ff4572"/>
<text transform="translate(693.6 780.97) scale(1.122 1)" font-size="12.2" font-weight="normal" fill="#fff" textLength="27.44" lengthAdjust="spacing">Fm9</text>
<rect x="845.9" y="765" width="143.67" height="20.8" rx="10.4" fill="#ff4572"/>
<text transform="translate(858.6 780.97) scale(1.228 1)" font-size="12.2" font-weight="normal" fill="#fff" textLength="49.67" lengthAdjust="spacing">G#maj9</text>
<rect x="1010.1" y="765" width="143.67" height="20.8" rx="10.4" fill="#ff4572"/>
<text transform="translate(1022.6 780.97) scale(1.225 1)" font-size="12.2" font-weight="normal" fill="#fff" textLength="24.5" lengthAdjust="spacing">A#9</text>
<rect x="1174.3" y="765" width="225.1" height="20.8" rx="10.4" fill="#ff4572"/>
<text transform="translate(1186.6 780.97) scale(1.133 1)" font-size="12.2" font-weight="normal" fill="#fff" textLength="28.77" lengthAdjust="spacing">Cm9</text>
<rect x="804.6" y="823.7" width="471.8" height="20.8" rx="10.4" fill="#00f5a1"/>
<text transform="translate(818 838.75) scale(1.000 1)" font-size="11.6" font-weight="normal" fill="#7fa0d8" textLength="7.2" lengthAdjust="spacing">D</text>
<circle cx="1413.1" cy="769" r="2.4" fill="#5e56b0"/>
<circle cx="1413.1" cy="776" r="2.4" fill="#5e56b0"/>
<circle cx="1413.1" cy="783" r="2.4" fill="#5e56b0"/>
<circle cx="1420.7" cy="769" r="2.4" fill="#5e56b0"/>
<circle cx="1420.7" cy="776" r="2.4" fill="#5e56b0"/>
<circle cx="1420.7" cy="783" r="2.4" fill="#5e56b0"/>
<path d="M1440.6 776 L1448.7 767.2 Q1449.3 766.5 1450.5 766.5 H1465.6 Q1466.8 766.5 1466.8 767.7 V784.3 Q1466.8 785.5 1465.6 785.5 H1450.5 Q1449.3 785.5 1448.7 784.8 Z" fill="#5e56b0"/>
<path d="M1453.2 771.5 L1462.2 780.5 M1462.2 771.5 L1453.2 780.5" fill="none" stroke="#1d1c35" stroke-width="1.9" stroke-linecap="round"/>
<circle cx="1413.1" cy="828.8" r="2.4" fill="#5e56b0"/>
<circle cx="1413.1" cy="835.8" r="2.4" fill="#5e56b0"/>
<circle cx="1413.1" cy="842.8" r="2.4" fill="#5e56b0"/>
<circle cx="1420.7" cy="828.8" r="2.4" fill="#5e56b0"/>
<circle cx="1420.7" cy="835.8" r="2.4" fill="#5e56b0"/>
<circle cx="1420.7" cy="842.8" r="2.4" fill="#5e56b0"/>
<path d="M1440.6 835.8 L1448.7 827 Q1449.3 826.3 1450.5 826.3 H1465.6 Q1466.8 826.3 1466.8 827.5 V844.1 Q1466.8 845.3 1465.6 845.3 H1450.5 Q1449.3 845.3 1448.7 844.6 Z" fill="#5e56b0"/>
<path d="M1453.2 831.3 L1462.2 840.3 M1462.2 831.3 L1453.2 840.3" fill="none" stroke="#1d1c35" stroke-width="1.9" stroke-linecap="round"/>
<circle cx="1061.1" cy="872" r="4.4" fill="#e6e6ea"/>
<rect x="52.3" y="901.5" width="136" height="40.3" rx="20.15" fill="#252344"/>
<path d="M76.86 915.16 L78 912.71 L80.76 913.85 L79.83 916.39 L80.91 917.47 L83.45 916.54 L84.59 919.3 L82.14 920.44 L82.14 921.96 L84.59 923.1 L83.45 925.86 L80.91 924.93 L79.83 926.01 L80.76 928.55 L78 929.69 L76.86 927.24 L75.34 927.24 L74.2 929.69 L71.44 928.55 L72.37 926.01 L71.29 924.93 L68.75 925.86 L67.61 923.1 L70.06 921.96 L70.06 920.44 L67.61 919.3 L68.75 916.54 L71.29 917.47 L72.37 916.39 L71.44 913.85 L74.2 912.71 L75.34 915.16 Z" fill="#8c86c8" stroke="#8c86c8" stroke-width="1.3" stroke-linejoin="round"/>
<circle cx="76.1" cy="921.2" r="3.4" fill="#252344"/>
<rect x="95" y="903.4" width="92" height="36.6" rx="18.3" fill="#3c3768"/>
<text transform="translate(108.7 926.01) scale(1.011 1)" font-size="12.6" font-weight="bold" fill="#8c86c6" textLength="38.5" lengthAdjust="spacing">BEND</text>
<path d="M153.7 915 V927.4 M156.4 915 V927.4" fill="none" stroke="#8c86c6" stroke-width="1.1"/>
<path d="M160.2 915 Q158.2 921.2 160.2 927.4 M164 915 Q160.6 921.2 164 927.4 M168.2 915 Q162.8 921.2 168.2 927.4 M173.4 915.2 Q164.6 921.2 173.4 927.2" fill="none" stroke="#8c86c6" stroke-width="1.1"/>
<path d="M209.4 921.3 L228 908.8 V933.8 Z" fill="#3c3768" stroke="#3c3768" stroke-width="3" stroke-linejoin="round"/>
<path d="M1299.7 921.3 L1281 908.8 V933.8 Z" fill="#3c3768" stroke="#3c3768" stroke-width="3" stroke-linejoin="round"/>
<rect x="52.4" y="978.4" width="137" height="42.6" rx="21.3" fill="#252344"/>
<text transform="translate(101 1004.96) scale(1.304 1)" font-size="14.4" font-weight="bold" fill="#ffffff" textLength="29.28" lengthAdjust="spacing">A#9</text>
<rect x="52.4" y="1032.4" width="137" height="42.6" rx="21.3" fill="#252344"/>
<text transform="translate(88 1057.5) scale(1.038 1)" font-size="12" font-weight="bold" fill="#8c86c6" textLength="62.26" lengthAdjust="spacing">PRESETS</text>
<circle cx="299.5" cy="922.6" r="28.4" fill="#2b284d" stroke="#332e5e" stroke-width="1"/>
<circle cx="367.6" cy="922.6" r="28.4" fill="#2b284d" stroke="#332e5e" stroke-width="1"/>
<circle cx="495.1" cy="922.6" r="28.4" fill="#2b284d" stroke="#332e5e" stroke-width="1"/>
<circle cx="563" cy="922.6" r="28.4" fill="#2b284d" stroke="#332e5e" stroke-width="1"/>
<circle cx="628" cy="922.6" r="28.6" fill="url(#kg2)"/>
<circle cx="756.9" cy="922.6" r="28.4" fill="#2b284d" stroke="#332e5e" stroke-width="1"/>
<circle cx="825" cy="922.6" r="28.6" fill="url(#kg2)"/>
<circle cx="952.5" cy="922.6" r="28.4" fill="#2b284d" stroke="#332e5e" stroke-width="1"/>
<circle cx="1020" cy="922.6" r="28.6" fill="url(#kg2)"/>
<circle cx="1085.4" cy="922.6" r="28.4" fill="#2b284d" stroke="#332e5e" stroke-width="1"/>
<circle cx="1214" cy="922.6" r="28.4" fill="#2b284d" stroke="#332e5e" stroke-width="1"/>
<defs><radialGradient id="wk" gradientUnits="objectBoundingBox" cx="0.5" cy="0.5" r="0.5" gradientTransform="translate(0.5 0.5) scale(2 1) translate(-0.5 -0.5)"><stop offset="0" stop-color="#9672ff"/><stop offset="0.48" stop-color="#7c5ad9"/><stop offset="0.82" stop-color="#6346b6"/><stop offset="1" stop-color="#573ea7"/></radialGradient></defs>
<rect x="237" y="966.4" width="60.6" height="122" rx="30.3" fill="#3b376a" stroke="#47427c" stroke-width="1"/>
<text transform="translate(258 1067.82) scale(1.070 1)" font-size="11.8" font-weight="bold" fill="#8c86c6" textLength="16.08" lengthAdjust="spacing">C4</text>
<rect x="302.3" y="966.4" width="60.6" height="122" rx="30.3" fill="#3b376a" stroke="#47427c" stroke-width="1"/>
<text transform="translate(323.1 1067.82) scale(1.096 1)" font-size="11.8" font-weight="bold" fill="#8c86c6" textLength="16.05" lengthAdjust="spacing">D4</text>
<rect x="367.6" y="966.4" width="60.6" height="122" rx="30.3" fill="#3b376a" stroke="#47427c" stroke-width="1"/>
<text transform="translate(388.8 1067.82) scale(1.091 1)" font-size="11.8" font-weight="bold" fill="#8c86c6" textLength="15.41" lengthAdjust="spacing">E4</text>
<rect x="432.9" y="966.4" width="60.6" height="122" rx="30.3" fill="#3b376a" stroke="#47427c" stroke-width="1"/>
<text transform="translate(454.2 1067.82) scale(1.128 1)" font-size="11.8" font-weight="bold" fill="#8c86c6" textLength="14.71" lengthAdjust="spacing">F4</text>
<rect x="498.2" y="966.4" width="60.6" height="122" rx="30.3" fill="#3b376a" stroke="#47427c" stroke-width="1"/>
<text transform="translate(518.9 1067.82) scale(1.063 1)" font-size="11.8" font-weight="bold" fill="#8c86c6" textLength="16.74" lengthAdjust="spacing">G4</text>
<rect x="563.5" y="966.4" width="60.6" height="122" rx="30.3" fill="#3b376a" stroke="#47427c" stroke-width="1"/>
<text transform="translate(584.2 1067.82) scale(1.110 1)" font-size="11.8" font-weight="bold" fill="#8c86c6" textLength="16.04" lengthAdjust="spacing">A4</text>
<rect x="628.8" y="966.4" width="60.6" height="122" rx="30.3" fill="#3b376a" stroke="#47427c" stroke-width="1"/>
<text transform="translate(649.8 1067.82) scale(1.070 1)" font-size="11.8" font-weight="bold" fill="#8c86c6" textLength="16.08" lengthAdjust="spacing">B4</text>
<rect x="694.1" y="966.4" width="60.6" height="122" rx="30.3" fill="#3b376a" stroke="#47427c" stroke-width="1"/>
<text transform="translate(715.1 1067.82) scale(1.070 1)" font-size="11.8" font-weight="bold" fill="#8c86c6" textLength="16.08" lengthAdjust="spacing">C5</text>
<rect x="759.4" y="966.4" width="60.6" height="122" rx="30.3" fill="url(#wk)"/>
<circle cx="789.7" cy="1064" r="18" fill="url(#glow)"/>
<text transform="translate(780.2 1067.82) scale(1.096 1)" font-size="11.8" font-weight="bold" fill="#fff" textLength="16.05" lengthAdjust="spacing">D5</text>
<rect x="824.7" y="966.4" width="60.6" height="122" rx="30.3" fill="#3b376a" stroke="#47427c" stroke-width="1"/>
<text transform="translate(845.9 1067.82) scale(1.091 1)" font-size="11.8" font-weight="bold" fill="#8c86c6" textLength="15.41" lengthAdjust="spacing">E5</text>
<rect x="890" y="966.4" width="60.6" height="122" rx="30.3" fill="url(#wk)"/>
<circle cx="920.3" cy="1064" r="18" fill="url(#glow)"/>
<text transform="translate(911.3 1067.82) scale(1.128 1)" font-size="11.8" font-weight="bold" fill="#fff" textLength="14.71" lengthAdjust="spacing">F5</text>
<rect x="955.3" y="966.4" width="60.6" height="122" rx="30.3" fill="#3b376a" stroke="#47427c" stroke-width="1"/>
<text transform="translate(976 1067.82) scale(1.063 1)" font-size="11.8" font-weight="bold" fill="#8c86c6" textLength="16.74" lengthAdjust="spacing">G5</text>
<rect x="1020.6" y="966.4" width="60.6" height="122" rx="30.3" fill="#3b376a" stroke="#47427c" stroke-width="1"/>
<text transform="translate(1041.3 1067.82) scale(1.110 1)" font-size="11.8" font-weight="bold" fill="#8c86c6" textLength="16.04" lengthAdjust="spacing">A5</text>
<rect x="1085.9" y="966.4" width="60.6" height="122" rx="30.3" fill="#3b376a" stroke="#47427c" stroke-width="1"/>
<text transform="translate(1106.9 1067.82) scale(1.070 1)" font-size="11.8" font-weight="bold" fill="#8c86c6" textLength="16.08" lengthAdjust="spacing">B5</text>
<rect x="1151.2" y="966.4" width="60.6" height="122" rx="30.3" fill="#3b376a" stroke="#47427c" stroke-width="1"/>
<text transform="translate(1172.2 1067.82) scale(1.070 1)" font-size="11.8" font-weight="bold" fill="#8c86c6" textLength="16.08" lengthAdjust="spacing">C6</text>
<rect x="1216.5" y="966.4" width="60.6" height="122" rx="30.3" fill="url(#wk)"/>
<circle cx="1246.8" cy="1064" r="18" fill="url(#glow)"/>
<text transform="translate(1237.3 1067.82) scale(1.096 1)" font-size="11.8" font-weight="bold" fill="#fff" textLength="16.05" lengthAdjust="spacing">D6</text>
</svg>
</body></html>
